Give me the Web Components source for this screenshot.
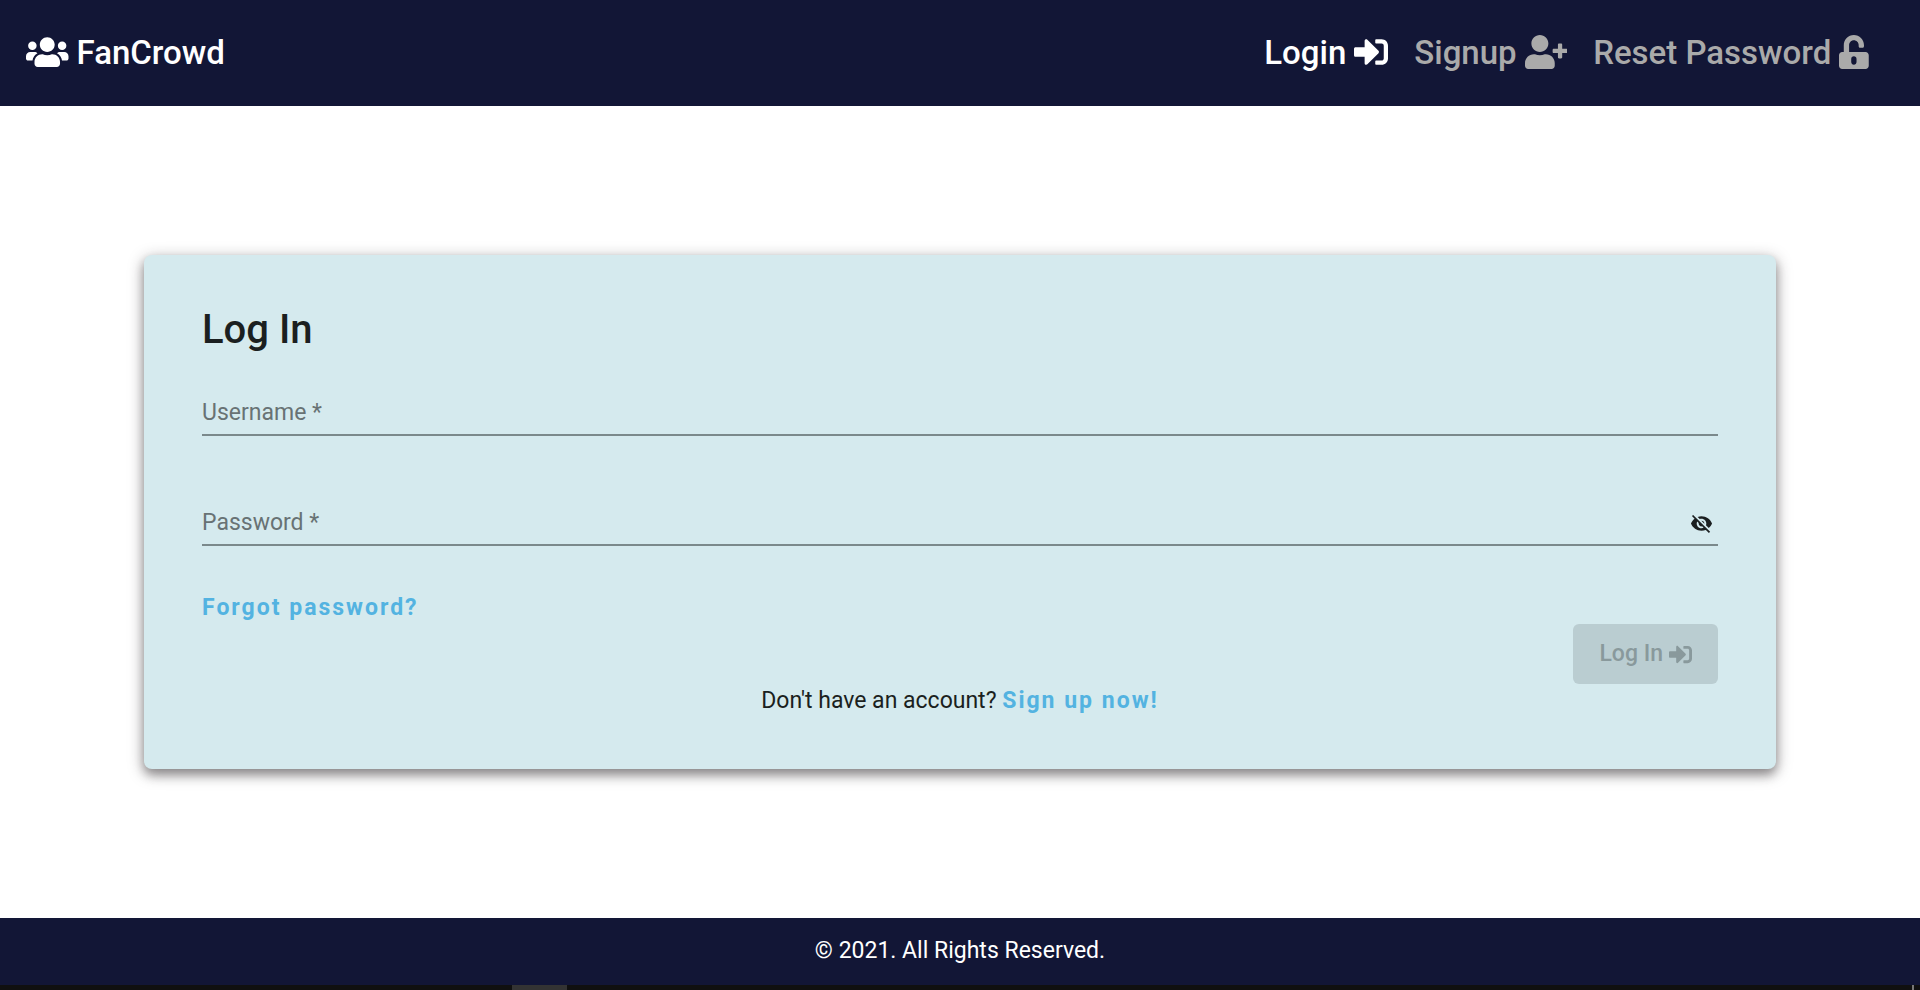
<!DOCTYPE html>
<html lang="en">
<head>
<meta charset="utf-8">
<title>FanCrowd</title>
<style>
html, body { margin: 0; height: 100%; }
body { font-family: Roboto, "Liberation Sans", sans-serif; background: #fff; color: #1b1f20; }
</style>
</head>
<body>
<fan-app></fan-app>
<script>
const ICONS = {
  users: ['0 0 640 512', 'M96 224c35.3 0 64-28.7 64-64s-28.7-64-64-64-64 28.7-64 64 28.7 64 64 64zm448 0c35.3 0 64-28.7 64-64s-28.7-64-64-64-64 28.7-64 64 28.7 64 64 64zm32 32h-64c-17.6 0-33.5 7.1-45.1 18.6 40.3 22.1 68.9 62 75.1 109.4h66c17.7 0 32-14.3 32-32v-32c0-35.3-28.7-64-64-64zm-256 0c61.9 0 112-50.1 112-112S381.9 32 320 32 208 82.1 208 144s50.1 112 112 112zm76.8 32h-8.3c-20.8 10-43.9 16-68.5 16s-47.6-6-68.5-16h-8.3C179.6 288 128 339.6 128 403.2V432c0 26.5 21.5 48 48 48h288c26.5 0 48-21.5 48-48v-28.8c0-63.6-51.6-115.2-115.2-115.2zm-223.7-13.4C161.5 263.1 145.6 256 128 256H64c-35.3 0-64 28.7-64 64v32c0 17.7 14.3 32 32 32h65.9c6.3-47.4 34.9-87.3 75.2-109.4z'],
  login: ['0 0 512 512', 'M416 448h-84c-6.6 0-12-5.4-12-12v-40c0-6.6 5.4-12 12-12h84c17.7 0 32-14.3 32-32V160c0-17.7-14.3-32-32-32h-84c-6.6 0-12-5.4-12-12V76c0-6.6 5.4-12 12-12h84c53 0 96 43 96 96v192c0 53-43 96-96 96zm-47-209L201 71c-15-15-41-4.5-41 17v96H24c-13.3 0-24 10.7-24 24v96c0 13.3 10.7 24 24 24h136v96c0 21.5 26 32 41 17l168-168c9.3-9.4 9.3-24.6 0-34z'],
  signup: ['0 0 640 512', 'M624 208h-64v-64c0-8.8-7.2-16-16-16h-32c-8.8 0-16 7.2-16 16v64h-64c-8.8 0-16 7.2-16 16v32c0 8.8 7.2 16 16 16h64v64c0 8.8 7.2 16 16 16h32c8.8 0 16-7.2 16-16v-64h64c8.8 0 16-7.2 16-16v-32c0-8.8-7.2-16-16-16zm-400 48c70.7 0 128-57.3 128-128S294.7 0 224 0 96 57.3 96 128s57.3 128 128 128zm89.6 32h-16.7c-22.2 10.2-46.9 16-72.9 16s-50.6-5.8-72.9-16h-16.7C60.2 288 0 348.2 0 422.4V464c0 26.5 21.5 48 48 48h352c26.5 0 48-21.5 48-48v-41.6c0-74.2-60.2-134.4-134.4-134.4z'],
  unlock: ['0 0 448 512', 'M400 256H152V152.9c0-39.6 31.7-72.5 71.3-72.9 40-.4 72.7 32.1 72.7 72v16c0 13.3 10.7 24 24 24h32c13.3 0 24-10.7 24-24v-16C376 68 307.5-.3 223.5 0 139.5.3 72 69.5 72 153.5V256H48c-26.5 0-48 21.5-48 48v160c0 26.5 21.5 48 48 48h352c26.5 0 48-21.5 48-48V304c0-26.5-21.5-48-48-48zM264 408c0 22.1-17.9 40-40 40s-40-17.9-40-40v-48c0-22.1 17.9-40 40-40s40 17.9 40 40v48z'],
  hidden: ['0 0 24 24', 'M12 7c2.76 0 5 2.24 5 5 0 .65-.13 1.26-.36 1.83l2.92 2.92c1.51-1.26 2.7-2.89 3.43-4.75-1.73-4.39-6-7.5-11-7.5-1.4 0-2.74.25-3.98.7l2.16 2.16C10.74 7.13 11.35 7 12 7zM2 4.27l2.28 2.28.46.46C3.08 8.3 1.78 10.02 1 12c1.73 4.39 6 7.5 11 7.5 1.55 0 3.03-.3 4.38-.84l.42.42L19.73 22 21 20.73 3.27 3 2 4.27zM7.53 9.8l1.55 1.55c-.05.21-.08.43-.08.65 0 1.66 1.34 3 3 3 .22 0 .44-.03.65-.08l1.55 1.55c-.67.33-1.41.53-2.2.53-2.76 0-5-2.24-5-5 0-.79.2-1.53.53-2.2zm4.31-.78l3.15 3.15.02-.16c0-1.66-1.34-3-3-3l-.17.01z']
};

class FanElement extends HTMLElement {
  render(html) {
    this.attachShadow({ mode: 'open' }).innerHTML = html;
  }
}

customElements.define('fan-icon', class extends FanElement {
  connectedCallback() {
    const [box, path] = ICONS[this.getAttribute('name')];
    this.render(`<style>
      :host { display: inline-flex; }
      svg { display: block; height: 1em; fill: currentColor; }
    </style><svg viewBox="${box}" aria-hidden="true"><path d="${path}"/></svg>`);
  }
});

customElements.define('fan-nav-link', class extends FanElement {
  connectedCallback() {
    this.render(`<style>
      :host { display: block; }
      a { display: flex; align-items: center; gap: 8px; color: #aaa; text-decoration: none; }
      :host([active]) a { color: #fff; }
      ::slotted(fan-icon) { font-size: 34px; padding-bottom: 2px; }
    </style><a href="${this.getAttribute('href')}"><slot></slot></a>`);
  }
});

customElements.define('fan-header', class extends FanElement {
  connectedCallback() {
    this.render(`<style>
      :host { display: block; background: #121636; font-size: 33px; line-height: 40px; font-weight: 500; }
      header { display: flex; justify-content: space-between; align-items: center; padding: 33px 51px 33px 26px; }
      nav { display: flex; gap: 26px; }
    </style>
    <header>
      <fan-nav-link href="#home" active><fan-icon name="users"></fan-icon><span>FanCrowd</span></fan-nav-link>
      <nav>
        <fan-nav-link href="#login" active><span>Login</span><fan-icon name="login"></fan-icon></fan-nav-link>
        <fan-nav-link href="#signup"><span>Signup</span><fan-icon name="signup"></fan-icon></fan-nav-link>
        <fan-nav-link href="#reset"><span>Reset Password</span><fan-icon name="unlock"></fan-icon></fan-nav-link>
      </nav>
    </header>`);
  }
});

customElements.define('fan-field', class extends FanElement {
  connectedCallback() {
    this.render(`<style>
      :host { display: block; }
      div { display: grid; grid-template-columns: 1fr auto; align-items: start; height: 35px; border-bottom: 2px solid #7b898b; }
      label, input { grid-row: 1; grid-column: 1; line-height: 28px; }
      label { color: #687274; pointer-events: none; z-index: 1; }
      input { box-sizing: border-box; width: 100%; height: 28px; margin: 0; padding: 0; border: 0; outline: 0; background: none; font: inherit; color: inherit; }
      input:focus, input:valid { background: #d5eaee; z-index: 2; }
    </style>
    <div>
      <label for="control">${this.getAttribute('label')} *</label>
      <input id="control" type="${this.getAttribute('type')}" required>
      <slot></slot>
    </div>`);
  }
});

customElements.define('fan-link', class extends FanElement {
  connectedCallback() {
    this.render(`<style>
      :host { display: inline; }
      a { color: #53b3e1; font-weight: 700; letter-spacing: 2px; text-decoration: none; }
    </style><a href="${this.getAttribute('href')}"><slot></slot></a>`);
  }
});

customElements.define('fan-card', class extends FanElement {
  connectedCallback() {
    this.render(`<style>
      :host { display: block; box-sizing: border-box; width: 85%; padding: 51px 58px 54px; border-radius: 8px; background: #d5eaee;
        box-shadow: 0 4px 16px rgba(36, 30, 32, .4), 0 6px 10px rgba(36, 30, 32, .3); }
    </style><slot></slot>`);
  }
});

customElements.define('fan-login', class extends FanElement {
  connectedCallback() {
    this.render(`<style>
      :host { display: flex; flex-direction: column; font-size: 23px; line-height: 28px; }
      h1 { margin: 0 0 45px; font-size: 40px; line-height: 48px; font-weight: 500; }
      form { display: flex; flex-direction: column; }
      fan-field { margin-bottom: 73px; }
      fan-field + fan-field { margin-bottom: 48px; }
      button { font: inherit; border: 0; }
      .eye { display: flex; padding: 0; margin: 3px 5px 0 0; background: none; color: #1b1f20; }
      .submit { display: flex; align-items: center; justify-content: center; gap: 6px; align-self: flex-end; height: 60px; margin: 2px 0 3px; padding: 0 26px;
        border-radius: 6px; background: #bacdd1; color: #89999c; font-weight: 500; }
      p { margin: 0; text-align: center; }
    </style>
    <h1>Log In</h1>
    <form>
      <fan-field label="Username" type="text"></fan-field>
      <fan-field label="Password" type="password">
        <button class="eye" type="button" aria-label="Show password"><fan-icon name="hidden"></fan-icon></button>
      </fan-field>
      <div><fan-link href="#reset">Forgot password?</fan-link></div>
      <button class="submit" type="submit" disabled><span>Log In</span><fan-icon name="login"></fan-icon></button>
    </form>
    <p>Don't have an account? <fan-link href="#signup">Sign up now!</fan-link></p>`);
  }
});

customElements.define('fan-footer', class extends FanElement {
  connectedCallback() {
    this.render(`<style>
      :host { display: block; background: #121636; color: #fff; font-size: 23px; line-height: 28px; text-align: center; }
      footer { padding: 19px 0 20px; }
    </style><footer><slot></slot></footer>`);
  }
});

customElements.define('fan-taskbar', class extends FanElement {
  connectedCallback() {
    this.render(`<style>
      :host { display: flex; height: 5px; background: #101010; }
      .task { width: 55px; margin-left: 512px; background: #333; }
      .edge { width: 2px; margin: 0 6px 0 auto; background: #777; }
    </style><span class="task"></span><span class="edge"></span>`);
  }
});

customElements.define('fan-app', class extends FanElement {
  connectedCallback() {
    this.render(`<style>
      :host { display: flex; flex-direction: column; min-height: 100%; }
      main { flex: 1; display: flex; align-items: center; justify-content: center; }
    </style>
    <fan-header></fan-header>
    <main><fan-card><fan-login></fan-login></fan-card></main>
    <fan-footer>© 2021. All Rights Reserved.</fan-footer>
    <fan-taskbar></fan-taskbar>`);
  }
});
</script>
</body>
</html>
